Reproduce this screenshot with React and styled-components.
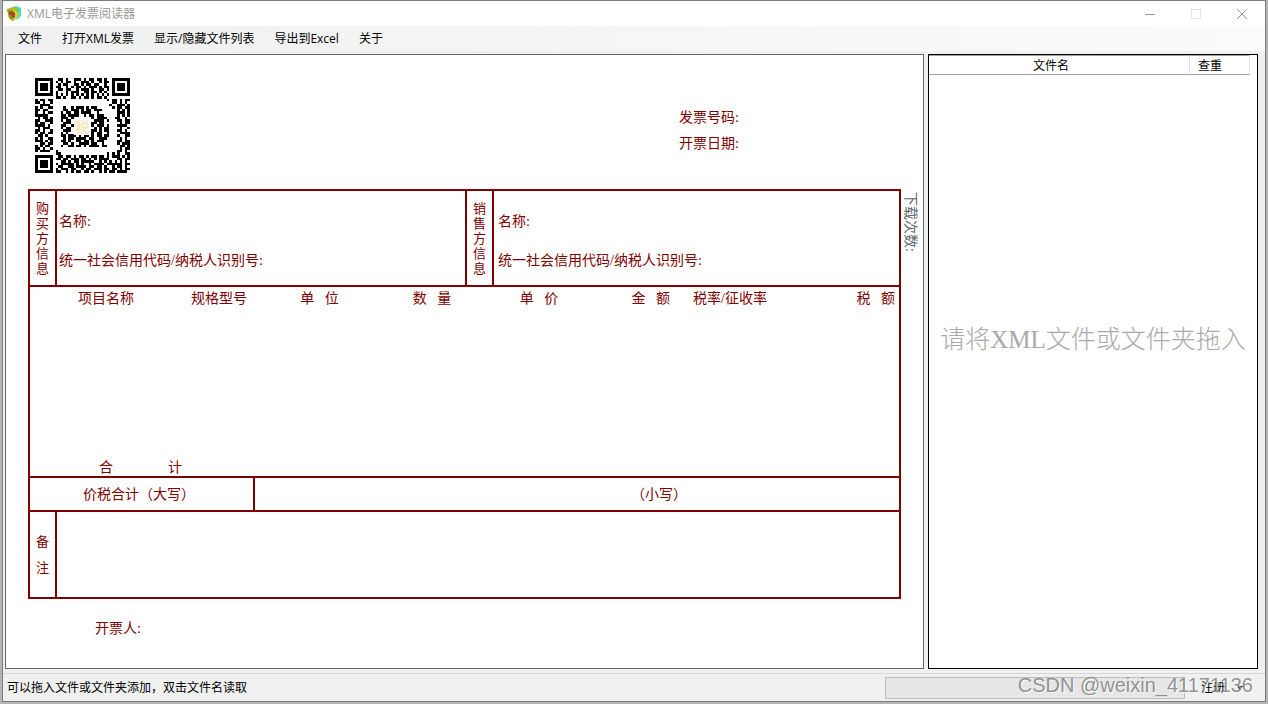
import React from "react";
import styled, { createGlobalStyle } from "styled-components";

const UI_FONT = '"Open Sans", "Noto Sans CJK SC", sans-serif';
const FORM_FONT = '"Liberation Serif", "Noto Sans CJK SC", serif';
const MAROON = "#800000";

const GlobalStyle = createGlobalStyle`
  * { box-sizing: border-box; }
  body {
    margin: 0;
    background: #b4b4b4;
    font: 12px/16px ${UI_FONT};
    color: #000;
  }
  button {
    border: 0;
    padding: 0;
    background: none;
    font: inherit;
    color: inherit;
  }
  table { border-collapse: collapse; }
  th { font-weight: normal; }
`;

const Desktop = styled.div`
  display: flex;
  min-height: 100vh;
  padding: 0 2px 2px;
`;

const Window = styled.div`
  position: relative;
  flex: 1;
  display: flex;
  flex-direction: column;
  border: 1px solid #7c7c7c;
  background: #f0f0f0;
`;

const TitleBar = styled.header`
  display: flex;
  align-items: center;
  height: 25px;
  padding-left: 4px;
  background: #fff;
`;

const Title = styled.h1`
  flex: 1;
  margin: 0 0 0 6px;
  font-size: 12px;
  font-weight: normal;
  color: #999;
`;

const CaptionButton = styled.button`
  display: flex;
  align-items: center;
  justify-content: center;
  width: 46px;
  height: 24px;
`;

const MenuBar = styled.nav`
  display: flex;
  height: 25px;
  padding-left: 5px;
  background: linear-gradient(to right, #f0f0f0, #fbfbfb);
`;

const MenuItem = styled.button`
  padding: 0 10px;
`;

const Workspace = styled.main`
  flex: 1;
  display: grid;
  grid-template-columns: minmax(0, 1fr) 330px;
  gap: 4px;
  padding: 3px 7px 4px 2px;
`;

const InvoicePanel = styled.section`
  border: 1px solid #696969;
  padding: 23px 0 0 22px;
  background: #fff;
  font: 14px/20px ${FORM_FONT};
  color: ${MAROON};
`;

const InvoiceHead = styled.div`
  display: flex;
  justify-content: space-between;
  height: 111px;
  padding: 0 22px 0 7px;
`;

const QrBox = styled.div`
  position: relative;
  width: 95px;
  height: 95px;
`;

const QrBadge = styled.span`
  position: absolute;
  inset: 39px 39px 38px 39px;
  display: flex;
  align-items: center;
  justify-content: center;
  background: #fff;
  font: bold 14px/18px "Noto Sans CJK SC", sans-serif;
  color: #f3eab8;
`;

const InvoiceMeta = styled.div`
  width: 222px;
  padding-top: 27px;
  line-height: 26px;
`;

const InvoiceBody = styled.div`
  display: flex;
`;

const Form = styled.div`
  flex: 1;
  border: 2px solid ${MAROON};
`;

const DownloadCount = styled.div`
  width: 22px;
  padding-top: 3px;
  writing-mode: vertical-rl;
  text-orientation: sideways;
  line-height: 26px;
  color: #5d646c;
`;

const Parties = styled.div`
  display: grid;
  grid-template-columns: 27px minmax(0, 1fr) 29px 405px;
  height: 94px;
`;

const SideLabel = styled.div`
  display: flex;
  align-items: center;
  justify-content: center;
  border-right: 2px solid ${MAROON};
  border-left: ${(p) => (p.$inner ? `2px solid ${MAROON}` : "0")};
  font-size: 13px;
  line-height: ${(p) => (p.$wide ? 26 : 15)}px;

  span { width: 13px; }
`;

const Party = styled.div`
  display: flex;
  flex-direction: column;
  gap: 19px;
  padding: 21px 0 0 ${(p) => p.$inset}px;
`;

const Items = styled.table`
  width: 100%;
  height: 193px;
  table-layout: fixed;
  border-top: 2px solid ${MAROON};
  border-bottom: 2px solid ${MAROON};
  border-collapse: separate;
  border-spacing: 0;
`;

const ItemHead = styled.th`
  width: ${(p) => (p.$width ? `${p.$width}px` : "auto")};
  height: 24px;
  padding: 0 ${(p) => p.$pad || 0}px 0 0;
  text-align: ${(p) => p.$align || "center"};
  white-space: pre;
`;

const TotalCell = styled.th`
  height: 18px;
  padding: 2px 0 0 69px;
  line-height: 16px;
`;

const TotalLabel = styled.div`
  display: flex;
  gap: 55px;
`;

const BlankCell = styled.td`
  padding: 0;
`;

const AmountRow = styled.div`
  display: grid;
  grid-template-columns: 225px 1fr;
  height: 34px;
  line-height: 30px;
  border-bottom: 2px solid ${MAROON};
`;

const AmountCell = styled.div`
  padding: 2px 0 0 ${(p) => p.$inset}px;
  border-right: ${(p) => (p.$divided ? `2px solid ${MAROON}` : "0")};
`;

const Remarks = styled.div`
  display: grid;
  grid-template-columns: 27px 1fr;
  height: 85px;
`;

const Issuer = styled.div`
  margin: 20px 0 0 67px;
`;

const FilePanel = styled.section`
  display: flex;
  flex-direction: column;
  border: 1px solid #000;
  background: #fff;
`;

const FileTable = styled.table`
  width: 321px;
  table-layout: fixed;
  border-collapse: separate;
  border-spacing: 0;
`;

const FileHead = styled.th`
  height: 20px;
  width: ${(p) => (p.$width ? `${p.$width}px` : "auto")};
  padding: 2px ${(p) => (p.$width ? 16 : 0)}px 0 ${(p) => (p.$width ? 0 : 8)}px;
  border-top: 1px solid #a0a0a0;
  border-right: 1px solid #e0e0e0;
  border-bottom: 1px solid #a0a0a0;
  text-align: ${(p) => (p.$width ? "center" : "left")};
`;

const DropArea = styled.div`
  flex: 1;
  display: flex;
  align-items: center;
  justify-content: center;
  padding-bottom: 63px;
  font: 300 25px/36px "Liberation Serif", "Noto Sans CJK SC", serif;
  color: #a9a9a9;
  white-space: nowrap;
`;

const StatusBar = styled.footer`
  display: flex;
  align-items: center;
  height: 28px;
  padding: 0 22px 0 4px;
  border-top: 1px solid #d7d7d7;
`;

const StatusText = styled.span`
  flex: 1;
`;

const Progress = styled.div`
  width: 300px;
  height: 22px;
  border: 1px solid #bcbcbc;
  background: #e6e6e6;
`;

const RegisterButton = styled.button`
  display: flex;
  align-items: center;
  gap: 12px;
  margin-left: 16px;
`;

const Watermark = styled.div`
  position: absolute;
  right: 12px;
  bottom: 4px;
  font: 20px/24px "Liberation Sans", sans-serif;
  color: rgba(120, 120, 120, 0.8);
  text-shadow: 1px 1px 0 rgba(255, 255, 255, 0.8);
  pointer-events: none;
`;

const QR_ROWS = [
  "#######..##.#..###.#.##.##.#..#######",
  "#.....#.#.#.##.#..###.#..#.##.#.....#",
  "#.###.#..#.##..##.#.##.##..#..#.###.#",
  "#.###.#.##..#.#.##.#.###.#.##.#.###.#",
  "#.###.#..##.##..#.###.#..##.#.#.###.#",
  "#.....#.#...#.###..##.##.#.#..#.....#",
  "#######.#.#.#.#.#.#.#.#.#.#.#.#######",
  "........##.#..##.#.##.#.##.#.........",
  "#.##.##.....................#.##.#.##",
  "##.#..#.......................##.#.#.",
  "..####.......................#..###.#",
  "#.#..##....#..#.###.#.##......#.##.##",
  "##.##......##.###.#.##.###......#.#.#",
  "#..#.##...#.##.##.####..#.......###.#",
  "#####.....##.####..#.##.###.....#.#.#",
  ".#.##.#...###.#.#.##..#.####...##..#.",
  "##..###...#.##.........####.#...##.##",
  "#.##..#....###........##.##......#.##",
  "####.#....##..#.......#.###.#...####.",
  ".#.###....#.##.........#.#.##....#..#",
  "##.#..#....###........##.#.##...##.#.",
  "#.##.##...#.#.........#.##..#....####",
  ".##.#.....##.###.#.##.#.##.##...#..##",
  "#.#..##....#.##.####.##..###.....#.#.",
  "###.#.#...##.#..##.##.#.###.....##.##",
  "..##.##....##.#..####.##..#.....#.###",
  "#.#.##....#..##.##.#.####.##.....##.#",
  "##.#..#..........................#.##",
  "#.####..#.......................##.#.",
  "........##..................#.#.#..##",
  "#######..##.##.#.##.#.##.##.#.###.#.#",
  "#.....#.##.##.###.##.#.#.####...##.##",
  "#.###.#...##.#.##.#####..#.#.#.#.#.#.",
  "#.###.#.#.#####.#.#..#.####.######.##",
  "#.###.#..##..##.####.##.##.#..#.##.#.",
  "#.....#.#.###.##..#.##.###.##.##.#.##",
  "#######.##..#.#.##.##.#..#.#.##.####.",
];

const qrPath = QR_ROWS.map((row, y) =>
  [...row].map((c, x) => (c === "#" ? `M${x} ${y}h1v1h-1z` : "")).join("")
).join("");

const ITEM_COLUMNS = [
  { label: "项目名称", width: 152 },
  { label: "规格型号", width: 74 },
  { label: "单   位", width: 127 },
  { label: "数   量", width: 98 },
  { label: "单   价", width: 116 },
  { label: "金   额", width: 73, align: "right" },
  { label: "税率/征收率", width: 120 },
  { label: "税   额", align: "right", pad: 4 },
];

const MENU = ["文件", "打开XML发票", "显示/隐藏文件列表", "导出到Excel", "关于"];

function AppIcon() {
  return (
    <svg width="14" height="16" viewBox="0 0 14 16" aria-hidden="true">
      <path d="M5 1 9 0l5 2v8l-4 4z" fill="#3fe0dc" />
      <path d="M0 3 6 1l6 2-1 8-5 4-4-3z" fill="#b9b51f" />
      <path d="M0 3 6 5v10l-4-3z" fill="#8f9a22" />
      <path d="M6 5 12 3l-1 8-5 4z" fill="#d3cf3a" />
      <path d="M2 6l3-1 3 2v4l-2 1-2-3-2-1z" fill="#a8432c" />
      <path d="M9 4l3-1v2l-2 1z" fill="#58c653" />
    </svg>
  );
}

export default function App() {
  return (
    <>
      <GlobalStyle />
      <Desktop>
        <Window>
          <TitleBar>
            <AppIcon />
            <Title>XML电子发票阅读器</Title>
            <CaptionButton aria-label="最小化">
              <svg width="10" height="10" stroke="#999">
                <path d="M0 5.5h10" />
              </svg>
            </CaptionButton>
            <CaptionButton aria-label="最大化" disabled>
              <svg width="10" height="10" stroke="#e4e4e4" fill="none">
                <path d="M.5.5h9v9h-9z" />
              </svg>
            </CaptionButton>
            <CaptionButton aria-label="关闭">
              <svg width="10" height="10" stroke="#999">
                <path d="M0 0l10 10M10 0 0 10" />
              </svg>
            </CaptionButton>
          </TitleBar>

          <MenuBar>
            {MENU.map((item) => (
              <MenuItem key={item}>{item}</MenuItem>
            ))}
          </MenuBar>

          <Workspace>
            <InvoicePanel>
              <InvoiceHead>
                <QrBox>
                  <svg width="95" height="95" viewBox="0 0 37 37" shapeRendering="crispEdges" aria-hidden="true">
                    <path d={qrPath} />
                  </svg>
                  <QrBadge>税</QrBadge>
                </QrBox>
                <InvoiceMeta>
                  <div>发票号码:</div>
                  <div>开票日期:</div>
                </InvoiceMeta>
              </InvoiceHead>

              <InvoiceBody>
                <Form>
                  <Parties>
                    <SideLabel><span>购买方信息</span></SideLabel>
                    <Party $inset={2}>
                      <div>名称:</div>
                      <div>统一社会信用代码/纳税人识别号:</div>
                    </Party>
                    <SideLabel $inner><span>销售方信息</span></SideLabel>
                    <Party $inset={4}>
                      <div>名称:</div>
                      <div>统一社会信用代码/纳税人识别号:</div>
                    </Party>
                  </Parties>

                  <Items>
                    <thead>
                      <tr>
                        {ITEM_COLUMNS.map((c) => (
                          <ItemHead key={c.label} scope="col" $width={c.width} $align={c.align} $pad={c.pad}>
                            {c.label}
                          </ItemHead>
                        ))}
                      </tr>
                    </thead>
                    <tbody>
                      <tr>
                        <BlankCell colSpan={8} />
                      </tr>
                    </tbody>
                    <tfoot>
                      <tr>
                        <TotalCell scope="row" colSpan={2}>
                          <TotalLabel>
                            <span>合</span>
                            <span>计</span>
                          </TotalLabel>
                        </TotalCell>
                        <BlankCell colSpan={6} />
                      </tr>
                    </tfoot>
                  </Items>

                  <AmountRow>
                    <AmountCell $inset={53} $divided>价税合计（大写）</AmountCell>
                    <AmountCell $inset={376}>（小写）</AmountCell>
                  </AmountRow>

                  <Remarks>
                    <SideLabel $wide><span>备注</span></SideLabel>
                    <div />
                  </Remarks>
                </Form>
                <DownloadCount>下载次数:</DownloadCount>
              </InvoiceBody>

              <Issuer>开票人:</Issuer>
            </InvoicePanel>

            <FilePanel>
              <FileTable>
                <thead>
                  <tr>
                    <FileHead scope="col" $width={261}>文件名</FileHead>
                    <FileHead scope="col">查重</FileHead>
                  </tr>
                </thead>
              </FileTable>
              <DropArea>请将XML文件或文件夹拖入</DropArea>
            </FilePanel>
          </Workspace>

          <StatusBar>
            <StatusText>可以拖入文件或文件夹添加，双击文件名读取</StatusText>
            <Progress role="progressbar" aria-label="读取进度" />
            <RegisterButton>
              注册
              <svg width="6" height="4" aria-hidden="true">
                <path d="M0 0h6L3 4z" />
              </svg>
            </RegisterButton>
          </StatusBar>
          <Watermark>CSDN @weixin_41171136</Watermark>
        </Window>
      </Desktop>
    </>
  );
}
